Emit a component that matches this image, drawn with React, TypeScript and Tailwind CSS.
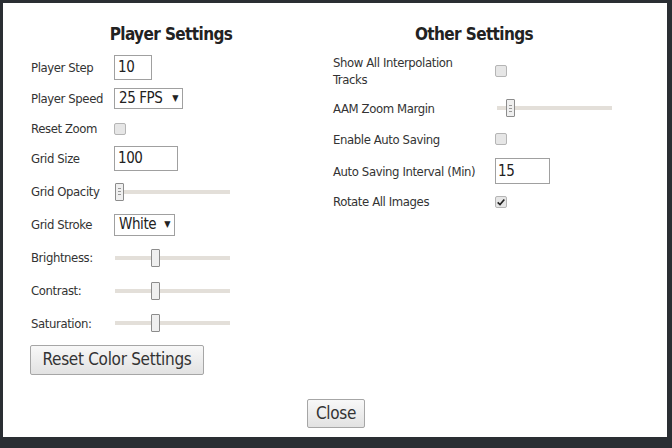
import React from "react";

const font = { fontFamily: '"Liberation Sans Narrow", "DejaVu Sans Condensed", "Roboto", sans-serif' };

function Slider({ pos, width = 115, grip = false }: { pos: number; width?: number; grip?: boolean }) {
  return (
    <div className="relative h-[18px]" style={{ width }}>
      <div className="absolute left-0 right-0 top-[7px] h-[4px] bg-[#e3dfd9]" />
      <div
        className="absolute top-0 flex h-[18px] w-[9px] flex-col items-center justify-center gap-[2px] rounded-[1px] border border-[#8c8c8c] bg-[#efefef]"
        style={{ left: pos }}
      >
        {grip && (
          <>
            <div className="h-px w-[3px] bg-[#999]" />
            <div className="h-px w-[3px] bg-[#999]" />
            <div className="h-px w-[3px] bg-[#999]" />
          </>
        )}
      </div>
    </div>
  );
}

function Check({ checked = false }: { checked?: boolean }) {
  return (
    <div className="flex h-[12px] w-[12px] items-center justify-center rounded-[2px] border border-[#b5b5b5] bg-[#e6e6e6]">
      {checked && (
        <svg viewBox="0 0 12 12" className="h-[10px] w-[10px]">
          <path d="M2 6.5 L4.8 9 L10 3" fill="none" stroke="#222" strokeWidth="2" />
        </svg>
      )}
    </div>
  );
}

function Row({ label, labelW, h, children }: { label: React.ReactNode; labelW: number; h: number; children?: React.ReactNode }) {
  return (
    <div className="flex items-center" style={{ height: h }}>
      <div className="shrink-0 whitespace-nowrap text-[13px] leading-[17px] tracking-[-0.4px] text-[#333]" style={{ width: labelW }}>
        {label}
      </div>
      {children}
    </div>
  );
}

export default function App() {
  return (
    <div className="h-[448px] w-[672px] overflow-hidden bg-[#2a2e33] pl-[3px] pt-[3px]" style={font}>
      <div className="relative h-[434px] w-[664px] bg-white">
        <div className="flex pl-[28px] pt-[19px]">
          {/* left column */}
          <div className="w-[280px]">
            <h2 className="mb-[6px] text-center text-[17px] font-bold leading-[24px] tracking-[-0.6px] text-[#222]">Player Settings</h2>
            <Row label="Player Step" labelW={83} h={30}>
              <div className="flex h-[25px] w-[38px] items-center border border-[#a0a0a0] pl-[3px] text-[15px] tracking-[-0.4px] text-[#222]">10</div>
            </Row>
            <Row label="Player Speed" labelW={83} h={33}>
              <div className="flex h-[21px] w-[69px] items-center justify-between border border-[#a0a0a0] px-[4px] text-[15px] tracking-[-0.4px] text-[#222]">
                <span>25 FPS</span>
                <span className="text-[9px]">▼</span>
              </div>
            </Row>
            <Row label="Reset Zoom" labelW={83} h={27}>
              <Check />
            </Row>
            <Row label="Grid Size" labelW={83} h={33}>
              <div className="flex h-[25px] w-[64px] items-center border border-[#a0a0a0] pl-[3px] text-[15px] tracking-[-0.4px] text-[#222]">100</div>
            </Row>
            <Row label="Grid Opacity" labelW={84} h={33}>
              <Slider pos={0} grip />
            </Row>
            <Row label="Grid Stroke" labelW={83} h={33}>
              <div className="flex h-[22px] w-[61px] items-center justify-between border border-[#a0a0a0] px-[4px] text-[15px] tracking-[-0.4px] text-[#222]">
                <span>White</span>
                <span className="text-[9px]">▼</span>
              </div>
            </Row>
            <Row label="Brightness:" labelW={84} h={33}>
              <Slider pos={36} />
            </Row>
            <Row label="Contrast:" labelW={84} h={33}>
              <Slider pos={36} />
            </Row>
            <Row label="Saturation:" labelW={84} h={32}>
              <Slider pos={36} />
            </Row>
            <button className="ml-[-1px] mt-[6px] h-[30px] w-[174px] rounded-[2px] border border-[#a6a6a6] bg-gradient-to-b from-[#f8f8f8] to-[#e2e2e2] text-[17px] tracking-[-0.3px] text-[#333]">
              Reset Color Settings
            </button>
          </div>
          {/* right column */}
          <div className="ml-[22px] w-[282px]">
            <h2 className="mb-[3px] text-center text-[17px] font-bold leading-[24px] tracking-[-0.6px] text-[#222]">Other Settings</h2>
            <Row label={<>Show All Interpolation<br />Tracks</>} labelW={162} h={44}>
              <Check />
            </Row>
            <Row label="AAM Zoom Margin" labelW={164} h={30}>
              <Slider pos={9} grip />
            </Row>
            <Row label="Enable Auto Saving" labelW={162} h={32}>
              <Check />
            </Row>
            <Row label="Auto Saving Interval (Min)" labelW={162} h={32}>
              <div className="flex h-[26px] w-[55px] items-center border border-[#a0a0a0] pl-[2px] text-[15px] tracking-[-0.4px] text-[#222]">15</div>
            </Row>
            <Row label="Rotate All Images" labelW={162} h={29}>
              <Check checked />
            </Row>
          </div>
        </div>
        <div className="absolute bottom-[9px] left-0 right-0 flex justify-center">
          <button className="ml-[2px] h-[29px] w-[58px] rounded-[2px] border border-[#a6a6a6] bg-gradient-to-b from-[#f8f8f8] to-[#e2e2e2] text-[17px] tracking-[-0.3px] text-[#333]">
            Close
          </button>
        </div>
      </div>
    </div>
  );
}
